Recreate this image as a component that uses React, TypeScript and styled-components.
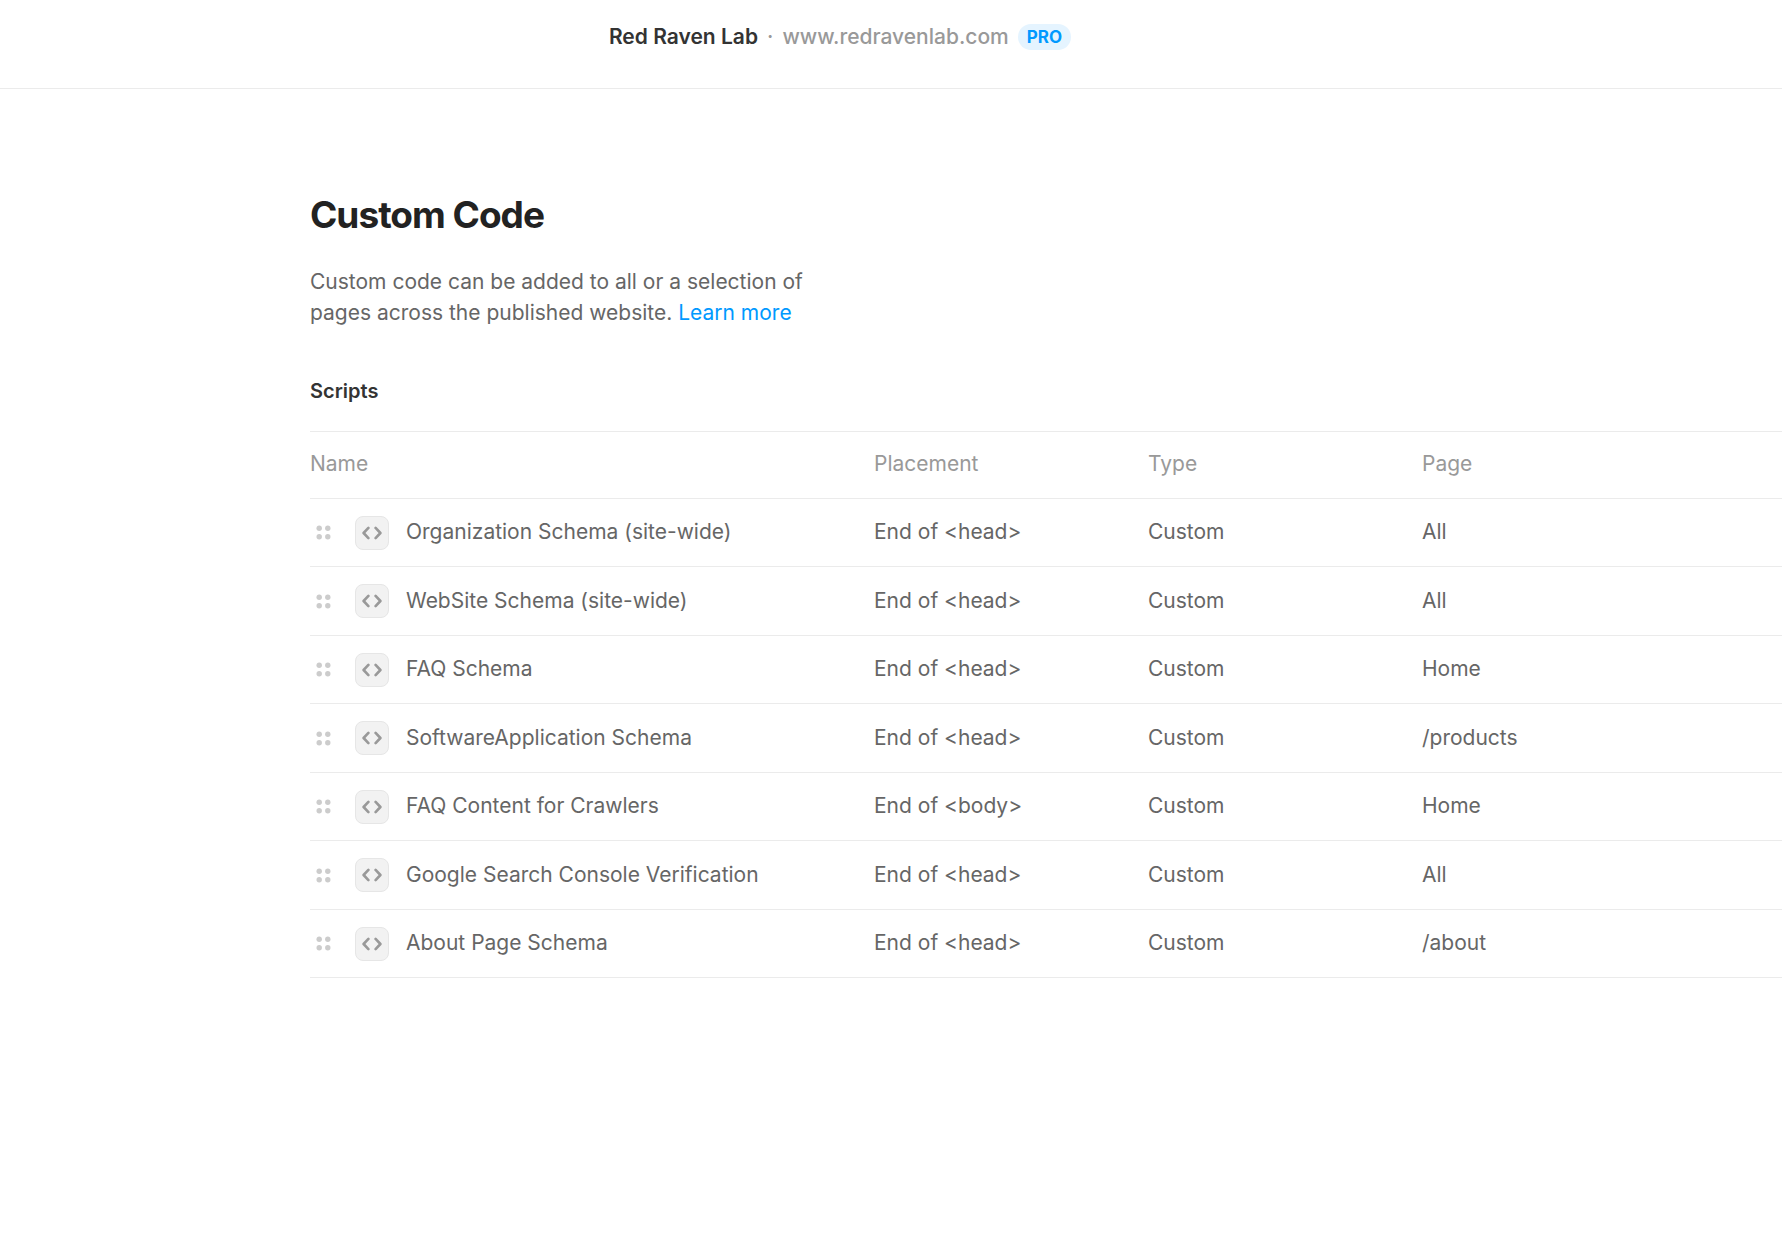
import React from "react";
import styled, { createGlobalStyle } from "styled-components";

const GlobalStyle = createGlobalStyle`
  *, *::before, *::after { box-sizing: border-box; }
  body {
    margin: 0;
    background: #fff;
    color: #666;
    font-family: Inter, "Liberation Sans", sans-serif;
    font-size: 21px;
    font-weight: 400;
    line-height: 31px;
  }
`;

const TopBar = styled.header`
  display: flex;
  justify-content: center;
  align-items: flex-start;
  height: 89px;
  padding: 21px 102px 0 0;
  border-bottom: 1px solid #ebebeb;
`;

const SiteInfo = styled.div`
  display: flex;
  align-items: center;
  gap: 9px;
  font-weight: 500;
  white-space: nowrap;
`;

const SiteName = styled.span`
  color: #333;
  font-weight: 600;
`;

const Separator = styled.span`
  color: #999;
`;

const SiteLink = styled.a`
  color: #999;
  text-decoration: none;
`;

const PlanBadge = styled.span`
  padding: 0 9px;
  border-radius: 13px;
  background: #e5f4ff;
  color: #0099ff;
  font-size: 17px;
  font-weight: 700;
  line-height: 26px;
`;

const Content = styled.main`
  padding: 103px 0 104px 310px;
`;

const PageTitle = styled.h1`
  margin: 0 0 28px;
  color: #222;
  font-size: 37px;
  font-weight: 700;
  line-height: 46px;
  letter-spacing: -1px;
`;

const Intro = styled.p`
  max-width: 500px;
  margin: 0 0 48px;
`;

const LearnMore = styled.a`
  color: #0099ff;
  text-decoration: none;
`;

const SectionTitle = styled.h2`
  margin: 0 0 24px;
  color: #333;
  font-size: 20px;
  font-weight: 600;
  line-height: 31px;
`;

const Table = styled.table`
  width: 100%;
  border-collapse: separate;
  border-spacing: 0;
  border-top: 1px solid #ebebeb;
  table-layout: fixed;
`;

const HeadCell = styled.th<{ $width?: number }>`
  width: ${(p) => (p.$width ? `${p.$width}px` : "auto")};
  height: 67px;
  padding: 0 0 4px;
  border-bottom: 1px solid #ebebeb;
  color: #999;
  font-weight: 400;
  text-align: left;
`;

const Row = styled.tr`
  height: 68px;

  &:nth-child(even) {
    height: 69px;
  }
`;

const Cell = styled.td`
  padding: 0 0 2px;
  border-bottom: 1px solid #ebebeb;
  white-space: nowrap;
`;

const NameCell = styled(Cell)`
  padding: 0;
`;

const NameContent = styled.div`
  display: flex;
  align-items: center;
  padding-left: 6px;
`;

const DragHandle = styled.button`
  display: flex;
  margin: 0 24px 0 0;
  padding: 0;
  border: 0;
  background: none;
  color: #ccc;
  cursor: grab;
`;

const ScriptIcon = styled.span`
  display: flex;
  align-items: center;
  justify-content: center;
  width: 34px;
  height: 34px;
  margin-right: 17px;
  border: 1px solid #e6e6e6;
  border-radius: 8px;
  background: #f2f2f2;
  color: #999;
`;

const ScriptName = styled.span`
  padding-bottom: 2px;
`;

const DotsGlyph = () => (
  <svg width="15" height="15" viewBox="0 0 15 15" fill="currentColor" aria-hidden="true">
    <circle cx="3.2" cy="3.2" r="2.7" />
    <circle cx="11.8" cy="3.2" r="2.7" />
    <circle cx="3.2" cy="11.8" r="2.7" />
    <circle cx="11.8" cy="11.8" r="2.7" />
  </svg>
);

const CodeGlyph = () => (
  <svg
    width="20"
    height="14"
    viewBox="0 0 20 14"
    fill="none"
    stroke="currentColor"
    strokeWidth="2.6"
    strokeLinecap="round"
    strokeLinejoin="round"
    aria-hidden="true"
  >
    <path d="M6.4 1.9 L1.6 7 L6.4 12.1" />
    <path d="M13.6 1.9 L18.4 7 L13.6 12.1" />
  </svg>
);

const scripts = [
  { name: "Organization Schema (site-wide)", placement: "End of <head>", page: "All" },
  { name: "WebSite Schema (site-wide)", placement: "End of <head>", page: "All" },
  { name: "FAQ Schema", placement: "End of <head>", page: "Home" },
  { name: "SoftwareApplication Schema", placement: "End of <head>", page: "/products" },
  { name: "FAQ Content for Crawlers", placement: "End of <body>", page: "Home" },
  { name: "Google Search Console Verification", placement: "End of <head>", page: "All" },
  { name: "About Page Schema", placement: "End of <head>", page: "/about" },
];

export default function App() {
  return (
    <>
      <GlobalStyle />
      <TopBar>
        <SiteInfo>
          <SiteName>Red Raven Lab</SiteName>
          <Separator>·</Separator>
          <SiteLink href="#site">www.redravenlab.com</SiteLink>
          <PlanBadge>PRO</PlanBadge>
        </SiteInfo>
      </TopBar>
      <Content>
        <PageTitle>Custom Code</PageTitle>
        <Intro>
          Custom code can be added to all or a selection of pages across the published website.{" "}
          <LearnMore href="#learn-more">Learn more</LearnMore>
        </Intro>
        <SectionTitle id="scripts-title">Scripts</SectionTitle>
        <Table aria-labelledby="scripts-title">
          <thead>
            <tr>
              <HeadCell scope="col" $width={564}>Name</HeadCell>
              <HeadCell scope="col" $width={274}>Placement</HeadCell>
              <HeadCell scope="col" $width={274}>Type</HeadCell>
              <HeadCell scope="col">Page</HeadCell>
            </tr>
          </thead>
          <tbody>
            {scripts.map((script) => (
              <Row key={script.name}>
                <NameCell>
                  <NameContent>
                    <DragHandle type="button" aria-label={`Reorder ${script.name}`}>
                      <DotsGlyph />
                    </DragHandle>
                    <ScriptIcon>
                      <CodeGlyph />
                    </ScriptIcon>
                    <ScriptName>{script.name}</ScriptName>
                  </NameContent>
                </NameCell>
                <Cell>{script.placement}</Cell>
                <Cell>Custom</Cell>
                <Cell>{script.page}</Cell>
              </Row>
            ))}
          </tbody>
        </Table>
      </Content>
    </>
  );
}
